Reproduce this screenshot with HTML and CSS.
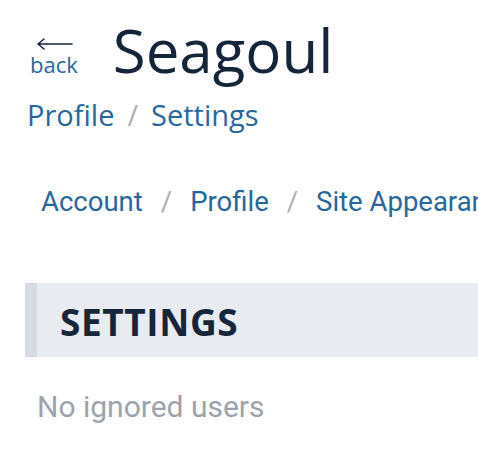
FILE: index.html
```html
<!DOCTYPE html>
<html lang="en">
<head>
<meta charset="utf-8">
<title>Seagoul - Settings</title>
<link rel="stylesheet" href="styles.css">
</head>
<body>
<div class="page">
  <header class="top">
    <a class="back" href="#">
      <svg class="arrow" width="36" height="12" viewBox="0 0 36 12" aria-hidden="true">
        <path d="M1 6 H35 M1 6 L7 1 M1 6 L7 11" fill="none" stroke="#14253a" stroke-width="1.6" stroke-linecap="round" stroke-linejoin="round"/>
      </svg>
      <span class="back-label">back</span>
    </a>
    <h1 class="title">Seagoul</h1>
  </header>
  <nav class="crumbs">
    <a href="#">Profile</a><span class="sep">/</span><a href="#">Settings</a>
  </nav>
  <nav class="tabs">
    <a href="#">Account</a><span class="sep">/</span><a href="#">Profile</a><span class="sep">/</span><a href="#">Site Appearance</a><span class="sep">/</span><a href="#">Ignored Users</a>
  </nav>
  <section class="panel">
    <h2 class="panel-title">SETTINGS</h2>
  </section>
  <p class="empty">No ignored users</p>
</div>
</body>
</html>
```

FILE: styles.css
```css
html, body {
  margin: 0;
  padding: 0;
  background: #ffffff;
  overflow: hidden;
}

.page {
  width: 700px;
  padding: 14px 0 0 25px;
  font-family: "Open Sans", "Liberation Sans", sans-serif;
}

a {
  color: #28679e;
  text-decoration: none;
}

.top {
  display: flex;
  align-items: baseline;
  gap: 35px;
  padding-left: 5px;
}

.back {
  display: inline-block;
  font-size: 22px;
  line-height: 22px;
}

.arrow {
  display: block;
  margin: 0 0 3px 7px;
}

.back-label {
  display: block;
}

.title {
  margin: 0;
  font-size: 60px;
  line-height: 72px;
  font-weight: 400;
  color: #14253a;
}

.crumbs {
  margin-top: 11px;
  font-size: 29px;
  line-height: 36px;
  padding-left: 2px;
  white-space: nowrap;
}

.sep {
  color: #adb0b3;
  padding: 0 13px;
}

.tabs {
  margin-top: 53px;
  padding-left: 16px;
  font-family: Roboto, "Liberation Sans", sans-serif;
  font-size: 27.5px;
  line-height: 32px;
  white-space: nowrap;
}

.tabs .sep {
  padding: 0 18px;
}

.panel {
  margin-top: 65px;
  background: #e8ebf0;
  border-left: 12px solid #d6dbe3;
  padding: 17px 0 13px 23px;
}

.panel-title {
  margin: 0;
  font-size: 37px;
  line-height: 44px;
  font-weight: 700;
  color: #15263a;
  letter-spacing: 0.6px;
}

.empty {
  margin: 32px 0 0 0;
  padding-left: 12px;
  font-family: Roboto, "Liberation Sans", sans-serif;
  font-size: 30px;
  line-height: 36px;
  color: #9da3aa;
}
```
